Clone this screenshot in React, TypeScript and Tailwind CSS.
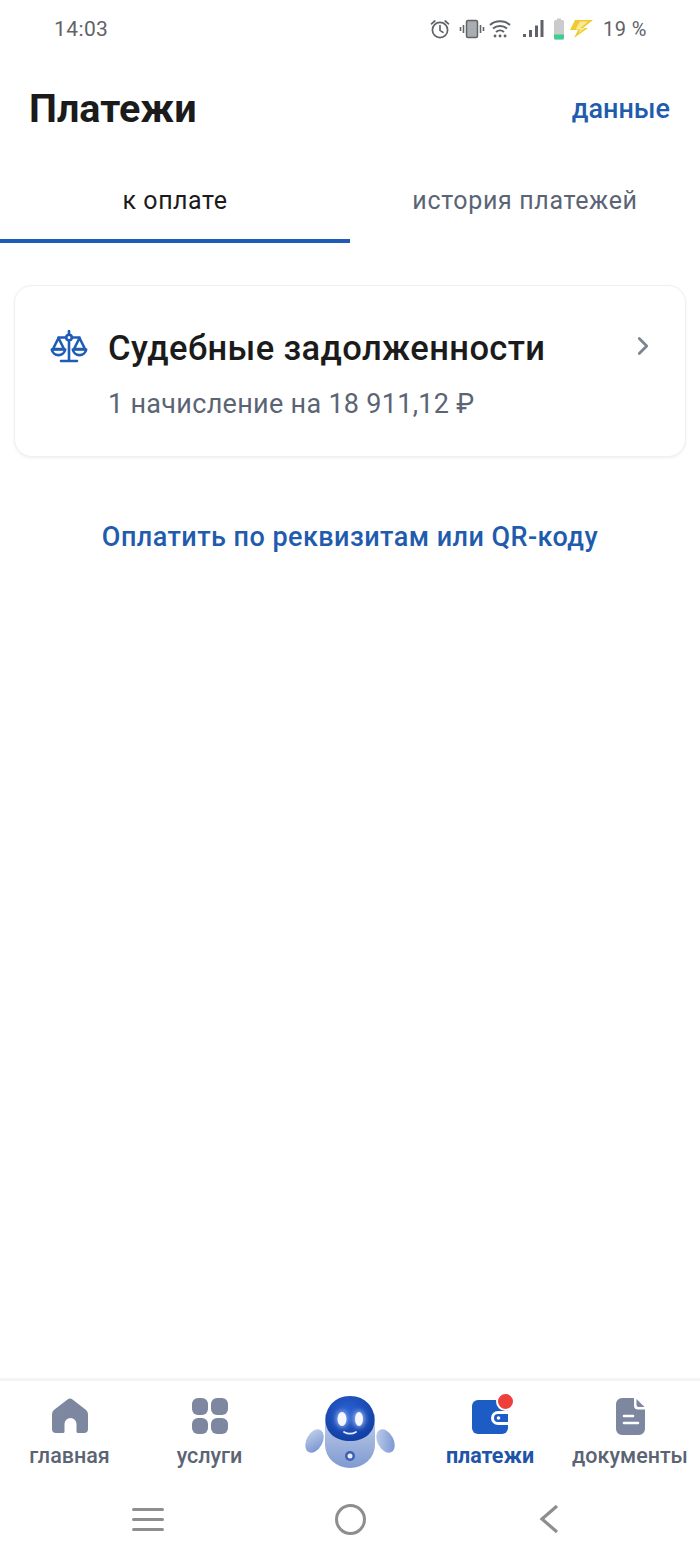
import React from 'react';
import { ChevronRight } from 'lucide-react';

const StatusIcons = () => (
  <div className="flex items-center">
    {/* alarm */}
    <svg width="20" height="20" viewBox="0 0 20 20" fill="none" stroke="#5f6368" strokeWidth="1.7" className="shrink-0">
      <circle cx="10" cy="11" r="7.6" />
      <path d="M10 6.500v4.900l3 2M1.500 4.800 4.800 2M18.500 4.800 15.200 2" strokeLinecap="round" />
    </svg>
    {/* vibrate */}
    <svg width="26" height="20" viewBox="0 0 26 20" fill="none" className="ml-[9px] shrink-0">
      <rect x="7.500" y="1.500" width="11" height="17" rx="1.500" fill="#a9acb0" stroke="#5f6368" strokeWidth="1.500" />
      <path d="M4.500 6v8M1.500 8v4M21.500 6v8M24.500 8v4" stroke="#5f6368" strokeWidth="1.600" />
    </svg>
    {/* wifi */}
    <svg width="22" height="20" viewBox="0 0 22 20" fill="none" stroke="#5f6368" strokeWidth="2" className="ml-[4px] shrink-0">
      <path d="M1 6c5.500-5 14.500-5 20 0M4 9.500c3.800-3.300 10.200-3.300 14 0M7 13c2.300-2 5.700-2 8 0" />
      <path d="M6 17h.1M11 17h.1M16 17h.1" strokeWidth="2.800" strokeLinecap="round" />
    </svg>
    {/* signal */}
    <svg width="22" height="20" viewBox="0 0 22 20" fill="#5f6368" className="ml-[11px] shrink-0">
      <rect x="1" y="15" width="3" height="3" />
      <rect x="7" y="11" width="3" height="7" />
      <rect x="13" y="6.500" width="3" height="11.500" />
      <rect x="18.500" y="1" width="3" height="17" />
    </svg>
    {/* battery */}
    <svg width="13" height="22" viewBox="0 0 13 22" className="ml-[9px] shrink-0">
      <path d="M4 0.500h4v1.500h1.500A1.500 1.500 0 0 1 11 3.500v16.500a1.500 1.500 0 0 1-1.500 1.500h-7A1.500 1.500 0 0 1 1 20V3.500A1.500 1.500 0 0 1 2.500 2H4z" fill="#c9cbcd" />
      <path d="M1 16.500h10V20a1.500 1.500 0 0 1-1.500 1.500h-7A1.500 1.500 0 0 1 1 20z" fill="#3ecf8e" />
    </svg>
    {/* bolt */}
    <svg width="25" height="20" viewBox="0 0 25 20" className="ml-[3px] shrink-0">
      <path d="M6 1h18L14 9h5L5 19l4-8H1z" fill="#eecb2f" />
      <path d="M11 2.500 6.500 10.500h5L9 14.500l7-5.500h-4.500L19 2.500z" fill="#f8e99a" />
    </svg>
    <span className="ml-[9px] whitespace-nowrap text-[20px] leading-none tracking-[0.5px] text-[#5f6368]">19 %</span>
  </div>
);

const ScalesIcon = () => (
  <svg width="38" height="34" viewBox="0 0 38 34" fill="none" stroke="#1f5cb5" strokeWidth="2.600" strokeLinejoin="round" strokeLinecap="round">
    <path d="M19 1v3M19 11v19M11 31h16" />
    <circle cx="19" cy="7.500" r="2.800" />
    <path d="M16 7.500H8.500M22 7.500h7.500" />
    <path d="M8.500 8 3 19h11zM29.500 8 24 19h11z" />
    <path d="M1.800 19.500a6.800 6.800 0 0 0 13.400 0zM22.800 19.500a6.800 6.800 0 0 0 13.400 0z" />
  </svg>
);

const HomeIcon = () => (
  <svg width="36" height="36" viewBox="0 0 36 36" fill="#7d88a0">
    <path d="M15.500 1.500a4 4 0 0 1 5 0l13.300 10.300a5.500 5.500 0 0 1 2.200 4.400V31a4 4 0 0 1-4 4h-6a1.500 1.500 0 0 1-1.500-1.500V26a6 6 0 0 0-12 0v7.500A1.500 1.500 0 0 1 11 35H4a4 4 0 0 1-4-4V16.200a5.500 5.500 0 0 1 2.200-4.400z" />
  </svg>
);

const GridIcon = () => (
  <div className="grid h-[36px] w-[36px] grid-cols-2 gap-[3px]">
    <div className="rounded-[6px] bg-[#7d88a0]" />
    <div className="rounded-[6px] bg-[#7d88a0]" />
    <div className="rounded-[6px] bg-[#7d88a0]" />
    <div className="rounded-[6px] bg-[#7d88a0]" />
  </div>
);

const WalletIcon = () => (
  <div className="relative h-[36px] w-[36px]">
    <svg width="36" height="36" viewBox="0 0 36 36">
      <path d="M6 2h24a6 6 0 0 1 6 6v22a6 6 0 0 1-6 6H6a6 6 0 0 1-6-6V8a6 6 0 0 1 6-6z" fill="#1c5cc4" />
      <path d="M36 13H26a7 7 0 0 0 0 14h10z" fill="#fff" />
      <path d="M36 16H26a4 4 0 0 0 0 8h10z" fill="#1c5cc4" />
      <circle cx="26.500" cy="20" r="1.800" fill="#fff" />
    </svg>
    <div className="absolute right-[-7px] top-[-6px] h-[19px] w-[19px] rounded-full border-2 border-white bg-[#ee3f3a]" />
  </div>
);

const DocIcon = () => (
  <svg width="29" height="37" viewBox="0 0 29 37">
    <path d="M6 0h12v7.500a4 4 0 0 0 4 4h7V31a6 6 0 0 1-6 6H6a6 6 0 0 1-6-6V6a6 6 0 0 1 6-6z" fill="#7d88a0" />
    <path d="M20.500 1 28.500 9h-6a2 2 0 0 1-2-2z" fill="#7d88a0" />
    <path d="M8 18h9M8 25h14" stroke="#fff" strokeWidth="2.600" strokeLinecap="round" />
  </svg>
);

const Robot = () => (
  <svg width="92" height="76" viewBox="0 0 92 76">
    <defs>
      <linearGradient id="body" x1="0" y1="0" x2="0" y2="1">
        <stop offset="0" stopColor="#c3cfe8" />
        <stop offset="1" stopColor="#7f9ad2" />
      </linearGradient>
      <linearGradient id="arm" x1="0" y1="0" x2="1" y2="1">
        <stop offset="0" stopColor="#c8d4ec" />
        <stop offset="1" stopColor="#6f8fcf" />
      </linearGradient>
      <radialGradient id="head" cx="0.45" cy="0.35" r="0.75">
        <stop offset="0" stopColor="#2b62d2" />
        <stop offset="1" stopColor="#0d3a9c" />
      </radialGradient>
      <filter id="glow" x="-80%" y="-80%" width="260%" height="260%">
        <feGaussianBlur stdDeviation="2.500" />
      </filter>
    </defs>
    <ellipse cx="10.500" cy="46" rx="8" ry="12.500" transform="rotate(28 10.500 46)" fill="url(#arm)" />
    <ellipse cx="81.500" cy="46" rx="8" ry="12.500" transform="rotate(-28 81.500 46)" fill="url(#arm)" />
    <path d="M21 19h50v31a25 23 0 0 1-50 0z" fill="url(#body)" />
    <path d="M46 1C62 1 70.500 13 70.500 25 70.500 38 60 46 46 46S21.500 38 21.500 25C21.500 13 30 1 46 1z" fill="url(#head)" />
    <ellipse cx="38" cy="24" rx="6" ry="8.500" fill="#a9c2fa" opacity="0.8" filter="url(#glow)" />
    <ellipse cx="55" cy="24" rx="6" ry="8.500" fill="#a9c2fa" opacity="0.8" filter="url(#glow)" />
    <ellipse cx="38" cy="24" rx="4.500" ry="7" fill="#f4f7ff" />
    <ellipse cx="55" cy="24" rx="4" ry="7" fill="#f4f7ff" />
    <path d="M40 37c3.500 2 8.500 2 12 0" stroke="#e6edff" strokeWidth="1.800" fill="none" strokeLinecap="round" />
    <circle cx="46" cy="61" r="5" fill="#3d5fb5" />
    <circle cx="46" cy="61" r="2.500" fill="#e9eefb" />
  </svg>
);

const NavItem = ({ icon, label, active, className }: { icon: React.ReactNode; label: string; active?: boolean; className: string }) => (
  <div className={`mt-[2px] flex flex-col items-center ${className}`}>
    <div className="flex h-[38px] items-center justify-center">{icon}</div>
    <span className={`mt-[9px] whitespace-nowrap text-[21.500px] leading-[24px] ${active ? 'font-bold text-[#1f55a8]' : 'font-medium text-[#5b6474]'}`}>
      {label}
    </span>
  </div>
);

export default function App() {
  return (
    <div className="flex h-[1556px] w-[700px] flex-col overflow-hidden bg-white font-['Roboto',sans-serif]">
      {/* status bar */}
      <div className="flex h-[58px] items-center justify-between pl-[54px] pr-[53px]">
        <span className="text-[21px] leading-none tracking-[0.4px] text-[#5f6368]">14:03</span>
        <StatusIcons />
      </div>

      {/* header */}
      <div className="mt-[28px] flex h-[46px] items-center justify-between pl-[29px] pr-[30px]">
        <h1 className="text-[39.500px] font-bold leading-none text-[#1b1b1b]">Платежи</h1>
        <span className="text-[27px] font-medium leading-none text-[#1f5cad]">данные</span>
      </div>

      {/* tabs */}
      <div className="mt-[31px] flex h-[80px]">
        <div className="flex flex-1 flex-col">
          <div className="flex flex-1 items-center justify-center text-[25px] tracking-[0.55px] text-[#1b1b1b]">к оплате</div>
          <div className="h-[4px] bg-[#1f5cb5]" />
        </div>
        <div className="flex flex-1 flex-col">
          <div className="flex flex-1 items-center justify-center text-[25px] tracking-[0.65px] text-[#5b6474]">история платежей</div>
          <div className="h-[4px]" />
        </div>
      </div>

      {/* card */}
      <div className="mx-[14px] mt-[42px] flex h-[172px] items-start rounded-[18px] border border-[#eef0f3] bg-white pl-[35px] pr-[27px] pt-[42px] shadow-[0_1px_3px_rgba(30,50,90,0.08)]">
        <div className="mt-[2px] w-[58px] shrink-0">
          <ScalesIcon />
        </div>
        <div className="flex-1">
          <div className="text-[34.500px] font-medium leading-[40px] tracking-[0.4px] text-[#1b1b1b]">Судебные задолженности</div>
          <div className="mt-[20px] text-[27px] leading-[32px] tracking-[0.3px] text-[#5b6474]">1 начисление на 18 911,12 ₽</div>
        </div>
        <ChevronRight className="mt-[3px] text-[#7b8494]" size={30} strokeWidth={2.200} />
      </div>

      {/* link */}
      <div className="mt-[62px] text-center text-[27px] font-medium leading-[36px] tracking-[0.45px] text-[#1f5cad]">
        Оплатить по реквизитам или QR-коду
      </div>

      <div className="flex-1" />

      {/* bottom nav */}
      <div className="flex h-[178px] flex-col border-t-[3px] border-[#f3f4f6]">
        <div className="flex h-[106px] pt-[14px]">
          <NavItem className="w-[139px]" icon={<HomeIcon />} label="главная" />
          <NavItem className="w-[141px]" icon={<GridIcon />} label="услуги" />
          <div className="flex w-[140px] justify-center">
            <Robot />
          </div>
          <NavItem className="w-[140px]" icon={<WalletIcon />} label="платежи" active />
          <NavItem className="w-[140px]" icon={<DocIcon />} label="документы" />
        </div>
        {/* android buttons */}
        <div className="flex flex-1 items-center justify-between pb-[5px] pl-[132px] pr-[141px]">
          <div className="flex w-[32px] flex-col gap-[7px]">
            <div className="h-[3px] rounded-full bg-[#8e8e8e]" />
            <div className="h-[3px] rounded-full bg-[#8e8e8e]" />
            <div className="h-[3px] rounded-full bg-[#8e8e8e]" />
          </div>
          <div className="ml-[-2px] h-[31px] w-[31px] rounded-full border-[3.5px] border-[#8e8e8e]" />
          <svg width="20" height="30" viewBox="0 0 20 30" fill="none" stroke="#8e8e8e" strokeWidth="3.200">
            <path d="M18 2 3 15l15 13" />
          </svg>
        </div>
      </div>
    </div>
  );
}
